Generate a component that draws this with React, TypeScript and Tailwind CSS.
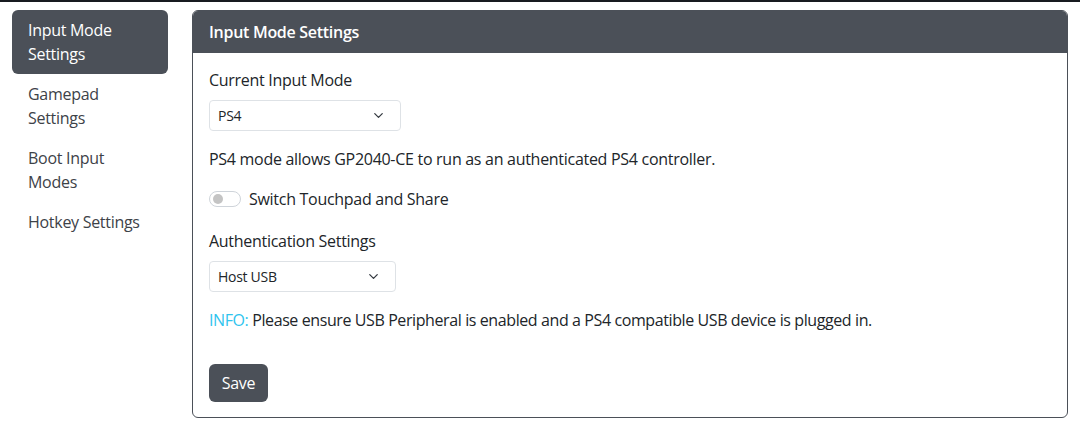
import { ChevronDown } from 'lucide-react';

const NAV = [
  { label: 'Input Mode Settings', lines: ['Input Mode', 'Settings'], active: true },
  { label: 'Gamepad Settings', lines: ['Gamepad', 'Settings'] },
  { label: 'Boot Input Modes', lines: ['Boot Input', 'Modes'] },
  { label: 'Hotkey Settings', lines: ['Hotkey Settings'] },
];

function Select({ value, width }: { value: string; width: string }) {
  return (
    <div
      className={`${width} h-[31px] border border-[#dee2e6] rounded-[4px] flex items-center justify-between pl-2 pr-[14px] text-[14px] text-[#212529] bg-white`}
    >
      <span>{value}</span>
      <ChevronDown size={15} strokeWidth={2} className="text-[#343a40]" />
    </div>
  );
}

export default function App() {
  return (
    <div
      className="w-[1080px] h-[435px] bg-white text-[#212529] text-[16px] leading-6 tracking-[-0.018em] overflow-hidden"
      style={{ fontFamily: '"Open Sans", "Noto Sans", sans-serif' }}
    >
      <div className="h-[2px] bg-[#181b20]" />
      <div className="flex gap-6 px-3 pt-2">
        {/* Sidebar */}
        <nav className="w-[156px] shrink-0 flex flex-col">
          {NAV.map((n) => (
            <div
              key={n.label}
              className={`px-4 py-2 rounded-[6px] ${n.active ? 'bg-[#4b5058] text-white' : 'text-[#3d4248]'}`}
            >
              {n.lines.map((l) => (
                <div key={l}>{l}</div>
              ))}
            </div>
          ))}
        </nav>

        {/* Card */}
        <div className="flex-1 border border-[#4b5058] rounded-[6px] overflow-hidden h-[408px]">
          <div className="bg-[#4b5058] text-white font-semibold px-4 py-[8px] h-[42px] flex items-center">
            Input Mode Settings
          </div>
          <div className="p-4 pt-[15px]">
            <div className="mb-2">Current Input Mode</div>
            <Select value="PS4" width="w-[192px]" />
            <p className="mt-4">PS4 mode allows GP2040-CE to run as an authenticated PS4 controller.</p>
            <div className="mt-4 flex items-center gap-2">
              <div className="w-8 h-4 rounded-full border border-[#cfd4da] flex items-center pl-[3px]">
                <div className="w-[10px] h-[10px] rounded-full bg-[#c4c4c4]" />
              </div>
              <span>Switch Touchpad and Share</span>
            </div>
            <div className="mt-[18px] mb-2">Authentication Settings</div>
            <Select value="Host USB" width="w-[187px]" />
            <p className="mt-4 tracking-[-0.025em]">
              <span className="text-[#2fc4ee]">INFO:</span> Please ensure USB Peripheral is enabled and a PS4
              compatible USB device is plugged in.
            </p>
            <button className="mt-[32px] bg-[#4b5058] text-white rounded-[6px] h-[38px] w-[59px] tracking-[-0.018em]">
              Save
            </button>
          </div>
        </div>
      </div>
    </div>
  );
}
